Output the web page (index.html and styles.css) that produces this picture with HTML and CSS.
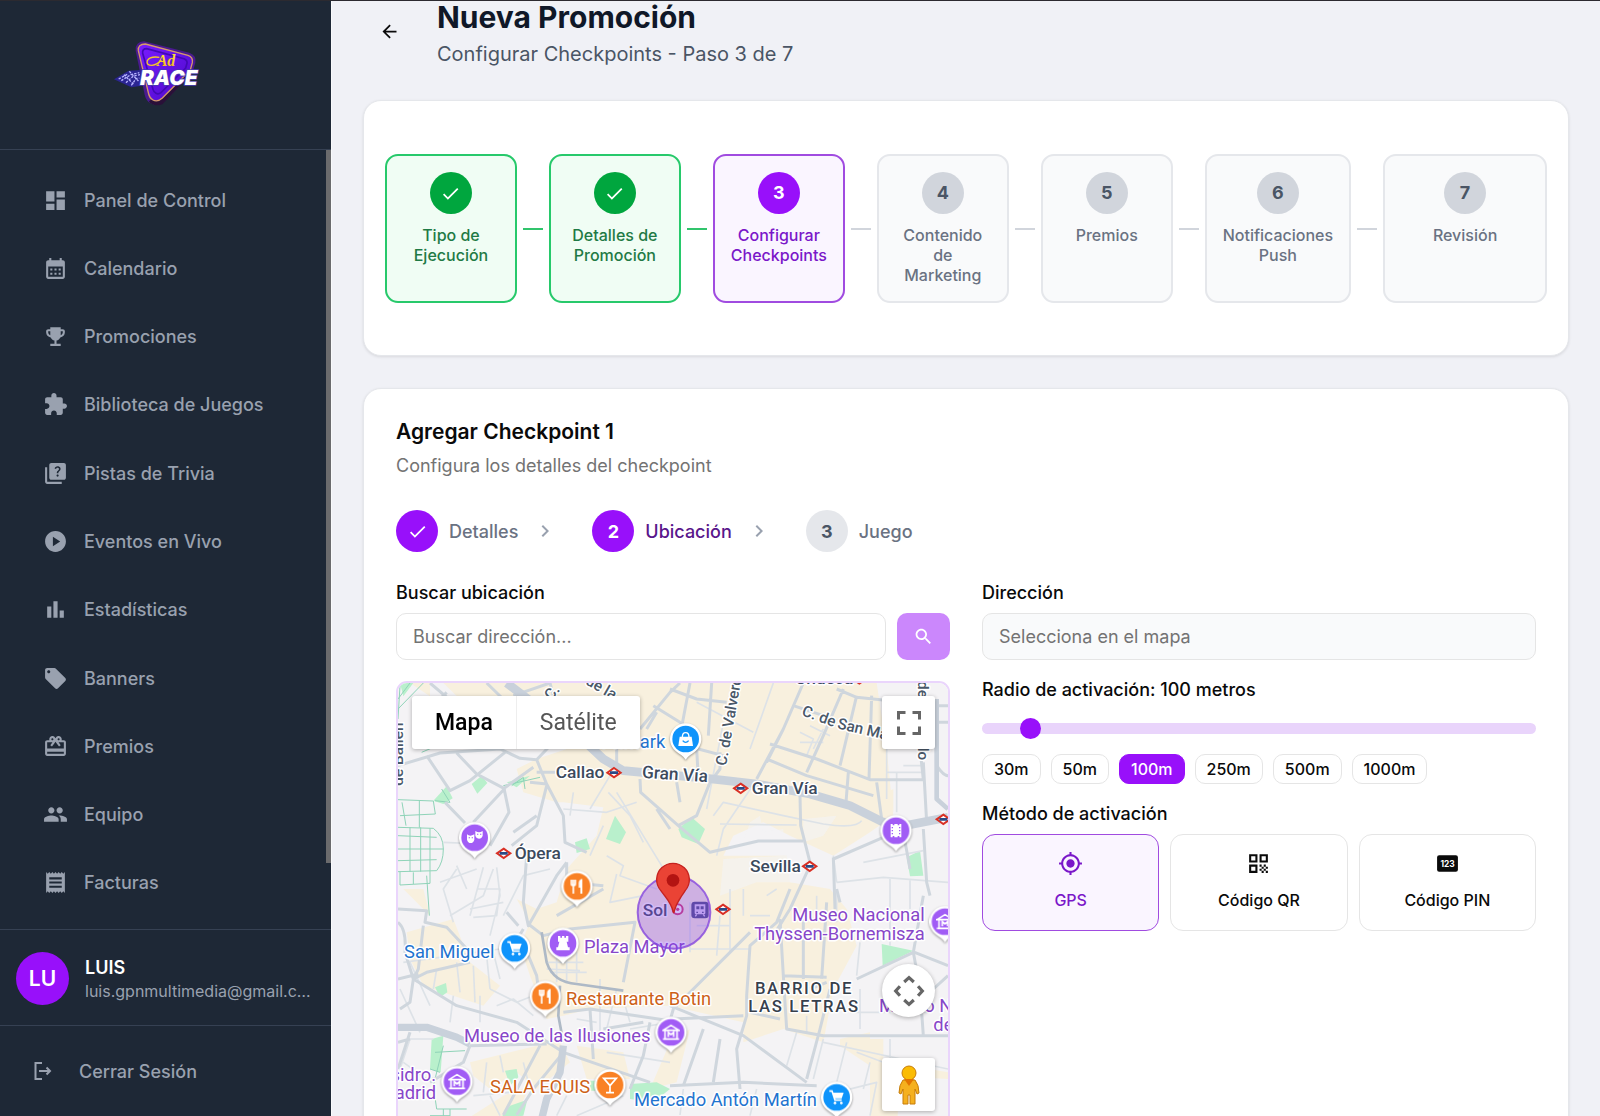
FILE: index.html
```html
<!DOCTYPE html>
<html lang="es">
<head>
<meta charset="utf-8">
<meta name="viewport" content="width=device-width, initial-scale=1">
<title>Nueva Promoción - Ad Race</title>
<link rel="stylesheet" href="styles.css">
</head>
<body>
<svg class="sprite" aria-hidden="true">
  <symbol id="i-check" viewBox="0 0 24 24"><path d="M9 16.17 4.83 12l-1.42 1.41L9 19 21 7l-1.41-1.41z"/></symbol>
  <symbol id="i-chevron" viewBox="0 0 24 24"><path d="M10 6 8.59 7.41 13.17 12l-4.58 4.59L10 18l6-6z"/></symbol>
  <symbol id="m-metro" viewBox="-26 -20 52 40"><path d="M0-14 20 0 0 14-20 0z" fill="#fff" stroke="#d93025" stroke-width="6"/><path d="M-12-4h24v8h-24z" fill="#2b4a86"/></symbol>
  <symbol id="m-pin" viewBox="-54 -54 108 124"><path d="M0 62C-8 50-18 46-30 36A47 47 0 1 1 30 36C18 46 8 50 0 62z" fill="#fff"/><circle r="40" fill="currentColor"/></symbol>
  <symbol id="m-museum" viewBox="-26 -26 52 52"><path fill="none" stroke="#fff" stroke-width="5" d="M-24-6 0-21 24-6zM-18-5v23M18-5v23M-24 20h48M-8 14V0l8 7 8-7v14"/></symbol>
  <symbol id="m-fork" viewBox="-26 -26 52 52"><path fill="none" stroke="#fff" stroke-width="5" d="M-17-20v13q0 5 6 5t6-5v-13M-11-20v42"/><path fill="#fff" d="M16-22v44h-6V4H5v-14q1-11 11-12z"/></symbol>
  <symbol id="m-cart" viewBox="-26 -26 52 52"><path fill="none" stroke="#fff" stroke-width="5" d="M-22-19h8L-5 8h20"/><path fill="#fff" d="M-13-14h34L15 3H-7z"/><circle cx="-5" cy="17" r="4" fill="#fff"/><circle cx="14" cy="17" r="4" fill="#fff"/></symbol>
</svg>

<div class="app">
  <aside class="sidebar">
    <div class="brand">
      <svg class="brand-logo" viewBox="16 0 360 270" role="img" aria-label="Ad Race">
        <defs>
          <linearGradient id="lg" x1="0" y1="0" x2="1" y2="1"><stop offset="0" stop-color="#7a1cff"/><stop offset="1" stop-color="#4a08c8"/></linearGradient>
          <linearGradient id="gd" x1="0" y1="0" x2="0" y2="1"><stop offset="0" stop-color="#ffe93b"/><stop offset="1" stop-color="#f0b01c"/></linearGradient>
        </defs>
        <path d="M130 34 266 68q22 8 18 30l-8 28-84 88q-20 18-42 6-14-8-18-26L105 62q-2-26 25-28z" fill="#4a1a8f"/>
        <path d="M150 210q12 14 32 6l86-90" fill="none" stroke="#2a1038" stroke-width="14"/>
        <path d="M134 42 262 76q16 6 13 22l-6 22-84 84q-14 13-28 6-10-5-13-18L113 62q-2-19 21-20z" fill="url(#lg)" stroke="#d59a6b" stroke-width="4"/>
        <path d="M138 56 250 86q11 5 9 14l-4 14-74 74q-8 6-15 2-7-4-9-12L126 70q-2-14 12-14z" fill="none" stroke="#4208b5" stroke-width="5"/>
        <path d="M40 148 84 122l38-2-4 48-26 4z" fill="#2b2592"/>
        <path d="M54 147l26-14M62 152l28-18 26-6M76 158l22-20 20-4M92 166l14-20 10-2M70 134l30 30M86 124l30 32" stroke="#b9b5ff" stroke-width="4" stroke-dasharray="7 4" fill="none"/>
        <path d="M176 82q-28-4-36 10-4 14 14 14 16-2 28-16" fill="none" stroke="#f7c928" stroke-width="4"/>
        <text x="168" y="109" class="logo-ad" fill="url(#gd)">Ad</text>
        <text x="118" y="165" class="logo-race">RACE</text>
      </svg>
    </div>
    <nav class="menu" aria-label="Principal">
      <a href="#"><svg viewBox="0 0 24 24"><path d="M3 13h8V3H3v10zm0 8h8v-6H3v6zm10 0h8V11h-8v10zm0-18v6h8V3h-8z"/></svg>Panel de Control</a>
      <a href="#"><svg viewBox="0 0 24 24"><path d="M19 4h-1V2h-2v2H8V2H6v2H5c-1.11 0-1.99.9-1.99 2L3 20c0 1.1.89 2 2 2h14c1.1 0 2-.9 2-2V6c0-1.1-.9-2-2-2zm0 16H5V10h14v10zM9 14H7v-2h2v2zm4 0h-2v-2h2v2zm4 0h-2v-2h2v2zm-8 4H7v-2h2v2zm4 0h-2v-2h2v2zm4 0h-2v-2h2v2z"/></svg>Calendario</a>
      <a href="#"><svg viewBox="0 0 24 24"><path d="M19 5h-2V3H7v2H5c-1.1 0-2 .9-2 2v1c0 2.55 1.92 4.63 4.39 4.94.63 1.5 1.98 2.63 3.61 2.96V19H7v2h10v-2h-4v-3.1c1.63-.33 2.98-1.46 3.61-2.96C19.08 12.63 21 10.55 21 8V7c0-1.1-.9-2-2-2zM5 8V7h2v3.82C5.84 10.4 5 9.3 5 8zm14 0c0 1.3-.84 2.4-2 2.82V7h2v1z"/></svg>Promociones</a>
      <a href="#"><svg viewBox="0 0 24 24"><path d="M20.5 11H19V7c0-1.1-.9-2-2-2h-4V3.5C13 2.12 11.88 1 10.5 1S8 2.12 8 3.5V5H4c-1.1 0-1.99.9-1.99 2v3.8H3.5c1.49 0 2.7 1.21 2.7 2.7s-1.21 2.7-2.7 2.7H2V20c0 1.1.9 2 2 2h3.8v-1.5c0-1.49 1.21-2.7 2.7-2.7 1.49 0 2.7 1.21 2.7 2.7V22H17c1.1 0 2-.9 2-2v-4h1.5c1.38 0 2.5-1.12 2.5-2.5S21.88 11 20.5 11z"/></svg>Biblioteca de Juegos</a>
      <a href="#"><svg viewBox="0 0 24 24"><path d="M4 6H2v14c0 1.1.9 2 2 2h14v-2H4V6z"/><path d="M20 2H8c-1.1 0-2 .9-2 2v12c0 1.1.9 2 2 2h12c1.1 0 2-.9 2-2V4c0-1.1-.9-2-2-2zm-5.99 13c-.59 0-1.05-.47-1.05-1.05 0-.59.47-1.04 1.05-1.04.59 0 1.04.45 1.04 1.04-.01.58-.45 1.05-1.04 1.05zm2.5-6.17c-.63.93-1.23 1.21-1.56 1.81-.13.24-.18.4-.18 1.18h-1.52c0-.41-.06-1.08.26-1.65.41-.73 1.18-1.16 1.63-1.8.48-.68.21-1.94-1.14-1.94-.88 0-1.32.67-1.5 1.23l-1.37-.57C11.51 5.96 12.52 5 13.99 5c1.23 0 2.08.56 2.51 1.26.37.61.58 1.73.01 2.57z"/></svg>Pistas de Trivia</a>
      <a href="#"><svg viewBox="0 0 24 24"><path d="M12 2C6.48 2 2 6.48 2 12s4.48 10 10 10 10-4.48 10-10S17.52 2 12 2zM9.5 16.5v-9l7 4.500z"/></svg>Eventos en Vivo</a>
      <a href="#"><svg viewBox="0 0 24 24"><path d="M4 9h4v11H4zm12 4h4v7h-4zm-6-9h4v16h-4z"/></svg>Estadísticas</a>
      <a href="#"><svg viewBox="0 0 24 24"><path d="M21.41 11.58l-9-9C12.05 2.22 11.55 2 11 2H4c-1.1 0-2 .9-2 2v7c0 .55.22 1.05.59 1.42l9 9c.36.36.86.58 1.41.58.55 0 1.05-.22 1.41-.59l7-7c.37-.36.59-.86.59-1.41 0-.55-.23-1.06-.59-1.42zM5.5 7C4.67 7 4 6.33 4 5.5S4.67 4 5.5 4 7 4.67 7 5.5 6.33 7 5.5 7z"/></svg>Banners</a>
      <a href="#"><svg viewBox="0 0 24 24"><path d="M20 6h-2.18c.11-.31.18-.65.18-1 0-1.66-1.34-3-3-3-1.05 0-1.96.54-2.5 1.35l-.5.67-.5-.68C10.96 2.54 10.05 2 9 2 7.34 2 6 3.34 6 5c0 .35.07.69.18 1H4c-1.11 0-1.99.89-1.99 2L2 19c0 1.11.89 2 2 2h16c1.11 0 2-.89 2-2V8c0-1.11-.89-2-2-2zm-5-2c.55 0 1 .45 1 1s-.45 1-1 1-1-.45-1-1 .45-1 1-1zM9 4c.55 0 1 .45 1 1s-.45 1-1 1-1-.45-1-1 .45-1 1-1zm11 15H4v-2h16v2zm0-5H4V8h5.08L7 10.83 8.62 12 11 8.76l1-1.36 1 1.36L15.38 12 17 10.83 14.92 8H20v6z"/></svg>Premios</a>
      <a href="#"><svg viewBox="0 0 24 24"><path d="M16 11c1.66 0 2.99-1.34 2.99-3S17.66 5 16 5c-1.66 0-3 1.34-3 3s1.34 3 3 3zm-8 0c1.66 0 2.99-1.34 2.99-3S9.66 5 8 5C6.34 5 5 6.34 5 8s1.34 3 3 3zm0 2c-2.33 0-7 1.17-7 3.5V19h14v-2.500c0-2.33-4.67-3.5-7-3.5zm8 0c-.29 0-.62.02-.97.05 1.16.84 1.97 1.97 1.97 3.45V19h6v-2.500c0-2.33-4.67-3.5-7-3.5z"/></svg>Equipo</a>
      <a href="#"><svg viewBox="0 0 24 24"><path d="M18 17H6v-2h12v2zm0-4H6v-2h12v2zm0-4H6V7h12v2zM3 22l1.5-1.5L6 22l1.5-1.5L9 22l1.5-1.5L12 22l1.5-1.5L15 22l1.5-1.5L18 22l1.5-1.5L21 22V2l-1.5 1.5L18 2l-1.5 1.5L15 2l-1.5 1.5L12 2l-1.500 1.500L9 2 7.500 3.500 6 2 4.500 3.500 3 2v20z"/></svg>Facturas</a>
      <span class="menu-thumb"></span>
    </nav>
    <div class="profile">
      <span class="avatar">LU</span>
      <div class="profile-text">
        <p class="profile-name">LUIS</p>
        <p class="profile-mail">luis.gpnmultimedia@gmail.com</p>
      </div>
    </div>
    <button class="logout" type="button">
      <svg viewBox="0 0 20 20"><path d="M10 2H3.500v16H10M7 10h11M14.500 6.500 18 10l-3.500 3.500"/></svg>Cerrar Sesión
    </button>
  </aside>

  <main class="main">
    <header class="page-head">
      <button class="back" type="button" aria-label="Volver"><svg viewBox="0 0 24 24"><path d="M20 11H7.830l5.590-5.590L12 4l-8 8 8 8 1.410-1.410L7.830 13H20v-2z"/></svg></button>
      <div>
        <h1>Nueva Promoción</h1>
        <p class="page-sub">Configurar Checkpoints - Paso 3 de 7</p>
      </div>
    </header>

    <section class="card wizard">
      <ol class="steps">
        <li class="done"><div class="step"><span class="badge"><svg><use href="#i-check"/></svg></span><span>Tipo de Ejecución</span></div></li>
        <li class="done"><div class="step"><span class="badge"><svg><use href="#i-check"/></svg></span><span>Detalles de Promoción</span></div></li>
        <li class="current"><div class="step"><span class="badge">3</span><span>Configurar Checkpoints</span></div></li>
        <li><div class="step"><span class="badge">4</span><span>Contenido de Marketing</span></div></li>
        <li><div class="step"><span class="badge">5</span><span>Premios</span></div></li>
        <li><div class="step"><span class="badge">6</span><span>Notificaciones Push</span></div></li>
        <li><div class="step"><span class="badge">7</span><span>Revisión</span></div></li>
      </ol>
    </section>

    <section class="card editor">
      <h2>Agregar Checkpoint 1</h2>
      <p class="editor-sub">Configura los detalles del checkpoint</p>
      <ol class="substeps">
        <li><span class="badge purple"><svg><use href="#i-check"/></svg></span>Detalles<svg class="chev"><use href="#i-chevron"/></svg></li>
        <li class="on"><span class="badge purple">2</span>Ubicación<svg class="chev"><use href="#i-chevron"/></svg></li>
        <li><span class="badge light">3</span>Juego</li>
      </ol>

      <div class="columns">
        <div class="column">
          <div class="field">
            <label for="search">Buscar ubicación</label>
            <div class="search-row">
              <input class="text-input" id="search" type="text" placeholder="Buscar dirección...">
              <button class="search-btn" type="button" aria-label="Buscar"><svg viewBox="0 0 24 24"><path d="M15.500 14h-.79l-.28-.27C15.410 12.590 16 11.110 16 9.500 16 5.910 13.090 3 9.500 3S3 5.910 3 9.500 5.910 16 9.500 16c1.610 0 3.090-.59 4.230-1.570l.27.28v.79l5 4.990L20.490 19l-4.990-5zm-6 0C7.010 14 5 11.990 5 9.500S7.010 5 9.500 5 14 7.010 14 9.500 11.990 14 9.500 14z"/></svg></button>
            </div>
          </div>
          <div class="map">
            <svg class="map-canvas" viewBox="24 42 1650 1440" preserveAspectRatio="xMinYMin slice">
              <rect x="0" y="0" width="1700" height="1500" fill="#f4f3f5"/>
              <g fill="#f8f0de">
                <path d="M160 42 250 130 440 150 560 230 440 270 380 300 400 370 500 400 520 400 640 415 620 500 530 600 500 700 440 720 380 690 420 760 390 830 420 920 470 1050 520 1040 600 1020 840 1010 1060 1060 1060 1120 1180 1080 1300 1120 1330 960 1400 830 1370 720 1320 660 1200 640 1190 560 1000 560 1030 500 1120 460 1200 500 1330 560 1440 490 1510 440 1490 240 1460 42z"/>
                <path d="M50 790 190 750 240 880 330 950 280 1010 100 950 60 870zM240 1180 440 1130 500 1100 540 1180 440 1260 380 1210 300 1260 250 1220zM840 1120 900 1080 860 1240 780 1260zM1440 1110 1480 1110 1480 1200 1530 1200 1520 1400 1440 1400zM1500 1180 1674 1210 1674 1230 1500 1220zM1350 1110 1440 1090 1440 1190 1350 1130zM560 1130 700 1150 720 1230 590 1230zM200 1370 340 1280 420 1250 360 1380z"/>
                <path d="M60 42h60v40zM40 660h60l20 80zM1490 370l20-10v70z"/>
              </g>
              <g fill="#f4f3f5">
                <path d="M1080 460 1110 440 1120 490 1180 480 1180 510 1060 520zM1000 570 1190 560 1240 640 1100 640 990 680zM1240 450 1340 440 1300 500 1240 520z" opacity=".6"/>
              </g>
              <g fill="#b9f0cc">
                <path d="M130 395 170 352 188 388 160 405zM245 345 275 320 292 342 262 374zM648 510 675 440 708 490 690 525zM555 520 590 508 600 540 560 552zM865 480 905 445 945 480 925 525 875 505zM1550 565 1590 545 1600 620 1560 622zM135 955 168 942 172 970 150 985zM1475 825 1570 845 1478 890zM125 1110 160 1100 152 1210 120 1200zM345 1205 380 1200 385 1225 360 1250zM330 1350 360 1310 412 1292 400 1340zM720 1245 800 1240 840 1260 790 1300 720 1290zM600 1235h20v30h-20zM30 42h40l-30 40zM350 340 420 320 380 355z"/>
              </g>
              <g fill="none" stroke="#8fd3b8" stroke-width="3">
                <path d="M24 392 130 396 136 435 30 440M36 400 48 470M88 396v80M24 475 130 478Q160 500 160 540T140 605L24 608M24 500 140 505M24 540 160 540M24 575 140 572M60 475v133M92 475v133M120 478v127M30 608v40l90-5v-38M70 610v35M110 620 118 740M24 90 60 42M24 120 100 42M30 50 24 150M95 250 130 235M135 395 180 400M155 360 180 400M340 350 450 325M365 350 400 325 405 360"/>
                <path d="M160 1130 130 1250 140 1320M135 1150 225 1145M120 1200 150 1210M140 1320h90M160 1320v80M180 1320v60M120 1340h60"/>
              </g>
              <g fill="none" stroke="#dde2e7" stroke-width="5" stroke-linejoin="round">
                <path d="M1150 42 1080 240M1000 160 950 420M920 100 1090 190M970 440 1000 400 1180 440 1300 465Q1400 480 1415 455M990 465 1220 468M1095 340 1000 480 980 560M640 470 600 560M550 370 540 440M655 370 720 440 760 520M680 370 870 680M520 420 650 430 740 400M650 560 700 590 690 620 800 660M680 615 660 700 760 680M600 420 660 320"/>
                <path d="M160 520 280 525M200 590 230 660M150 640 260 600M310 600 280 680 180 740M280 595 240 740M320 595 330 680 300 800M240 720 340 700M200 600 160 660 190 760M260 660 330 660 320 740 250 745M340 740 400 620 480 600"/>
                <path d="M40 880 330 840M290 860 300 960M310 850 330 930M200 880 210 970M250 890 255 1000M140 900 130 960M320 1010 370 990 430 1040M190 980 180 1060M300 960 380 1000 430 980M270 980 270 1060M30 960 90 1090M60 880 120 1010"/>
                <path d="M470 880h110M500 850v90M530 850v90M560 850v90M480 910h110M470 900 570 905M630 930v180M680 960 650 1080M720 1080 840 1060M650 1150 840 1180M560 1050 620 1060M700 990 720 1060"/>
                <path d="M900 700v150M990 740 980 860M1080 740h60M900 840h180M1060 660v80M1130 680 1160 660M1280 680v60M1340 660v100M920 770h100M1020 660v190M1410 820 1400 920M1410 960v120M1250 1040v50M1380 1030h240M1300 1110 1270 1230M1300 1120 1674 1200M1370 1120 1340 1240M1400 1150 1480 1180 1500 1260M1440 1180 1420 1260M1340 1270 1460 1240 1440 1340M1220 1090 1190 1190M1500 1110v90"/>
                <path d="M1340 640 1480 625 1674 640M1500 630v200M1560 630v90M1490 240v150M1520 310v120M1490 310h110M1540 290h60v40M1230 190 1270 210 1250 260M1260 170 1320 200M1300 180 1270 240M1230 220h70M1330 560l10 80M1420 580 1600 545"/>
                <path d="M560 1340 700 1280M500 1340 530 1280M880 1260 870 1338M1100 1260 1080 1340M300 1280 330 1340M400 1180 420 1260M290 1180 280 1270M330 1160 340 1210M30 1200 60 1110 130 1110M40 1180 110 1230 240 1210M250 1280 360 1270"/>
              </g>
              <g fill="none" stroke="#cfd6dd" stroke-width="9" stroke-linejoin="round">
                <path d="M24 290 150 252 330 240 390 268 440 272 480 230 560 190M440 272 470 345 520 440 525 520 590 550M110 260 180 365 240 335 345 250M200 252 260 315 342 358 357 430 300 530M342 358 430 295M470 350 440 470 365 530M440 440 370 490M165 400 225 462M250 460 345 358M120 42 200 110M170 70 90 150M290 42 370 120M370 80 480 42M420 340 470 345M440 310 495 310"/>
                <path d="M750 180 840 70 870 42M790 110 870 160 930 210M800 130 770 180M750 330 752 370 865 470 960 550 1105 516 1240 516M865 470 920 440 960 340 990 300 990 250M840 480 800 420M900 42 870 200M840 60 920 90 1010 100M920 240 925 330M965 42 955 200M925 240 1000 260M860 340 870 400M680 240v80M480 42 490 80"/>
                <path d="M1240 42 1180 180 1100 330M1180 180 1130 280M1360 60 1300 200 1250 310M1400 80 1350 290M1445 80 1437 330M1140 225 1280 270 1440 332 1600 332M1130 270 1250 320 1450 380M1375 310 1368 400M1230 380 1232 470 1260 580M1460 340 1475 450M1340 60 1400 85 1500 95M1210 110 1300 140M1600 332 1590 240M1600 280 1610 460M1600 480 1610 640 1620 680M1540 490 1560 600M1330 565 1335 720M1330 570 1480 505 1520 485M1640 90v200q20 30 34 30M1640 110h34M1640 160h34M1260 590 1200 720 1150 800"/>
                <path d="M24 720 110 725 105 760 170 775 240 850M100 770 85 900 70 930 200 1010 380 1060 520 1150 780 1240M24 930 85 915M24 760Q50 780 45 850L70 930 110 910 240 880M70 930 60 1000 30 1020M350 730 385 770M410 560 400 700 415 770 500 620 530 580M415 765 460 800 540 780 735 760 700 940M400 780 370 830 330 840M415 860 440 920 450 1000M500 740 640 660M530 580 530 640 640 650"/>
                <path d="M520 1030 600 1020 840 1055 850 1020 1080 790M840 1010 1060 1100 1250 1240M600 1020 610 1170M640 1080 760 1060M780 1060 760 1160 720 1260M240 1130 470 1125M520 1150 430 1260 380 1338M240 1130 220 1180 120 1240M450 1130 340 1338M24 1120 60 1110M840 1250 1060 1240 1280 1250M60 1090 24 1200"/>
                <path d="M1200 660 1160 760 1080 830 1070 980 1070 1040 1040 1140 1050 1260M1170 750 1180 920 1190 1080 1300 1100 1680 1100M1240 750v180M1310 700 1295 930M850 1050 1060 1040M940 1080 880 1250M990 1110 970 1240M1320 960 1290 1080 1250 1230M1570 850 1600 680M1574 850 1674 890M1400 930 1570 850 1590 960 1600 1100M1630 960 1674 920M1340 660 1350 700M1310 940 1260 960M1180 920 1310 925M1080 1030 1170 1050"/>
              </g>
              <g fill="none" stroke="#c9d1db" stroke-width="26" stroke-linejoin="round">
                <path d="M350 42 440 110 560 195 640 270 700 305 950 328 1100 345 1260 375 1380 410 1470 455 1520 475 1674 445"/>
                <path d="M20 1075 110 1075 200 1105 240 1125M520 1130 510 1210 470 1290 455 1350" stroke-width="22"/>
                <path d="M1640 90v300l34 30" stroke-width="14"/>
              </g>
              <g fill="none" stroke="#aeb9c6" stroke-width="8">
                <path d="M455 790 470 880Q490 940 560 945L700 965M510 950 505 1040 520 1120"/>
              </g>

              <g class="map-street">
                <text x="497" y="328">Callao</text>
                <text transform="translate(755 326) rotate(4)">Gran Vía</text>
                <text x="1085" y="376">Gran Vía</text>
                <text x="374" y="570">Ópera</text>
                <text x="1080" y="608">Sevilla</text>
                <text x="758" y="740">Sol</text>
                <text x="1215" y="45">Chueca</text>
              </g>
              <path d="M1400 42h16l-8 5z" fill="#d93025"/>
              <g class="map-lane">
                <text transform="translate(1008 292) rotate(-80)">C. de Valverde</text>
                <text transform="translate(1233 138) rotate(20)">C. de</text>
                <text transform="translate(1340 178) rotate(13)">San Marcos</text>
                <text transform="translate(1585 36) rotate(90)">de</text>
                <text transform="translate(1585 236) rotate(90)">lo</text>
                <text transform="translate(584 44) rotate(30)">de la</text>
                <text transform="translate(484 96) rotate(-50)">C.</text>
                <text transform="translate(40 350) rotate(-90)">de Bailén</text>
              </g>
              <g class="map-poi">
                <g class="poi-blue"><text x="826" y="238" text-anchor="end">Primark</text><text x="42" y="867">San Miguel</text><text x="732" y="1310">Mercado Antón Martín</text></g>
                <g class="poi-purple"><text x="582" y="852">Plaza Mayor</text><text x="222" y="1118">Museo de las Ilusiones</text><text x="138" y="1237" text-anchor="end">San Isidro.</text><text x="138" y="1290" text-anchor="end">Madrid</text><text x="1604" y="757" text-anchor="end">Museo Nacional</text><text x="1604" y="812" text-anchor="end">Thyssen-Bornemisza</text><text x="1467" y="1030">Museo Nacional</text><text x="1630" y="1085">de</text></g>
                <g class="poi-orange"><text x="528" y="1008">Restaurante Botin</text><text x="300" y="1272">SALA EQUIS</text></g>
              </g>
              <g class="map-area"><text x="1242" y="976">BARRIO DE</text><text x="1242" y="1028">LAS LETRAS</text></g>

              <g>
                <use href="#m-metro" x="646" y="291" width="52" height="40"/>
                <use href="#m-metro" x="315" y="533" width="52" height="40"/>
                <use href="#m-metro" x="1026" y="338" width="52" height="40"/>
                <use href="#m-metro" x="1233" y="572" width="52" height="40"/>
                <use href="#m-metro" x="1634" y="431" width="52" height="40"/>
                <use href="#m-metro" x="973" y="701" width="52" height="40"/>
              </g>
              <g class="pins">
                <g color="#a15cf5">
                  <use href="#m-pin" x="200" y="452" width="108" height="124"/>
                  <use href="#m-pin" x="1464" y="431" width="108" height="124"/>
                  <use href="#m-pin" x="465" y="769" width="108" height="124"/>
                  <use href="#m-pin" x="789" y="1036" width="108" height="124"/>
                  <use href="#m-pin" x="147" y="1184" width="108" height="124"/>
                  <use href="#m-pin" x="1611" y="704" width="108" height="124"/>
                </g>
                <g color="#f98125">
                  <use href="#m-pin" x="507" y="598" width="108" height="124"/>
                  <use href="#m-pin" x="412" y="928" width="108" height="124"/>
                  <use href="#m-pin" x="606" y="1194" width="108" height="124"/>
                </g>
                <g color="#0f94fb">
                  <use href="#m-pin" x="833" y="156" width="108" height="124"/>
                  <use href="#m-pin" x="320" y="784" width="108" height="124"/>
                  <use href="#m-pin" x="1286" y="1231" width="108" height="124"/>
                </g>
              </g>
              <g>
                <use href="#m-museum" x="817" y="1064" width="52" height="52"/>
                <use href="#m-museum" x="175" y="1212" width="52" height="52"/>
                <use href="#m-museum" x="1639" y="732" width="52" height="52"/>
                <use href="#m-fork" x="535" y="626" width="52" height="52"/>
                <use href="#m-fork" x="440" y="956" width="52" height="52"/>
                <use href="#m-cart" x="348" y="812" width="52" height="52"/>
                <use href="#m-cart" x="1314" y="1259" width="52" height="52"/>
                <path fill="#fff" d="M231 496q5 4 10 4t12-4v16q-3 10-11 10t-11-10zM256 486q6 4 11 4t11-4v14q-3 9-11 9t-11-8z"/>
                <path fill="#a15cf5" d="M236 505h4v3h-4zM245 505h4v3h-4zM261 494h4v3h-4zM270 494h4v3h-4z"/>
                <path fill="#fff" d="M1502 465h6v4h5v-4h10v4h5v-4h6v40h-6v-4h-5v4h-10v-4h-5v4h-6z"/>
                <path fill="#a15cf5" d="M1505 474h4v4h-4zM1505 483h4v4h-4zM1505 492h4v4h-4zM1527 474h4v4h-4zM1527 483h4v4h-4zM1527 492h4v4h-4z"/>
                <path fill="#fff" d="M504 801h7v5h5v-5h7v5h5v-5h7v17h-5l4 17h5v9h-40v-9h5l4-17h-4z"/>
                <path fill="#fff" d="M869 203h36l4 28h-44z"/><path d="M877 205q0-14 10-14t10 14" fill="none" stroke="#fff" stroke-width="4"/><path d="M878 215q9 10 18 0" fill="none" stroke="#0f94fb" stroke-width="4"/>
                <path fill="none" stroke="#fff" stroke-width="5" d="M641 1228h38l-19 22zM660 1250v20M648 1271h24"/>
              </g>
              <rect x="904" y="698" width="52" height="50" rx="10" fill="#4a4f86"/>
              <path d="M914 706h32v26q0 4-4 4h-24q-4 0-4-4z" fill="#dcd2f5"/><path d="M919 712h9v9h-9zM932 712h9v9h-9zM919 728h5v4h-5zM936 728h5v4h-5z" fill="#4a4f86"/><path d="m920 736-4 6M940 736l4 6" stroke="#dcd2f5" stroke-width="4"/>
              <circle cx="863" cy="721" r="15" fill="#fff" stroke="#d23a76" stroke-width="6"/><circle cx="863" cy="721" r="5" fill="#d23a76"/>
              <circle cx="852" cy="730" r="109" fill="#8540e8" fill-opacity=".36" stroke="#8546dd" stroke-opacity=".8" stroke-width="6"/>
              <path d="M851 732C842 696 830 690 812 664A49 49 0 1 1 886 664C870 690 860 696 851 732z" fill="#ea4335" stroke="#c5221f" stroke-width="4"/>
              <circle cx="849" cy="634" r="19" fill="#b31412"/>
            </svg>
            <div class="map-types">
              <button class="active" type="button">Mapa</button>
              <button type="button">Satélite</button>
            </div>
            <button class="map-btn full" type="button" aria-label="Pantalla completa"><svg viewBox="0 0 24 24"><path d="M1.500 8.500V1.500h7M15.500 1.500h7v7M22.500 15.500v7h-7M8.500 22.500h-7v-7" fill="none" stroke="#666" stroke-width="3"/></svg></button>
            <div class="map-corner">
              <button class="map-btn round" type="button" aria-label="Mover la cámara"><svg viewBox="0 0 30 30"><path d="m10.500 6.500 4.500-4 4.500 4M10.500 23.500l4.500 4 4.500-4M6.500 10.500l-4 4.500 4 4.500M23.500 10.500l4 4.500-4 4.500" fill="none" stroke="#666" stroke-width="3"/></svg></button>
              <button class="map-btn" type="button" aria-label="Street View"><svg class="pegman" viewBox="0 0 24 40"><circle cx="12" cy="8" r="7" fill="#fbbc04" stroke="#c77d0a"/><path d="M6 15h12q4 5 4 13l-2 1-2-5v15h-5v-9h-2v9H6V24l-2 5-2-1q0-8 4-13z" fill="#f5b01e" stroke="#c77d0a"/><path d="M7 14h10l-5 7z" fill="#e37400"/></svg></button>
            </div>
          </div>
        </div>

        <div class="column">
          <div class="field">
            <label for="address">Dirección</label>
            <input class="text-input muted" id="address" type="text" placeholder="Selecciona en el mapa" readonly>
          </div>
          <div class="field">
            <label for="radius">Radio de activación: 100 metros</label>
            <input class="slider" id="radius" type="range" min="30" max="1000" value="100">
            <div class="chips">
              <button type="button">30m</button>
              <button type="button">50m</button>
              <button class="active" type="button">100m</button>
              <button type="button">250m</button>
              <button type="button">500m</button>
              <button type="button">1000m</button>
            </div>
          </div>
          <div class="field">
            <span class="label">Método de activación</span>
            <div class="methods">
              <button class="active" type="button"><svg viewBox="0 0 24 24"><path d="M12 8c-2.210 0-4 1.790-4 4s1.790 4 4 4 4-1.790 4-4-1.790-4-4-4zm8.940 3c-.46-4.170-3.770-7.480-7.940-7.940V1h-2v2.060C6.830 3.520 3.520 6.830 3.060 11H1v2h2.060c.46 4.170 3.770 7.480 7.940 7.940V23h2v-2.060c4.170-.46 7.480-3.770 7.940-7.940H23v-2h-2.060zM12 19c-3.870 0-7-3.130-7-7s3.130-7 7-7 7 3.130 7 7-3.130 7-7 7z"/></svg>GPS</button>
              <button type="button"><svg viewBox="0 0 24 24"><path d="M3 11h8V3H3v8zm2-6h4v4H5V5zM3 21h8v-8H3v8zm2-6h4v4H5v-4zM13 3v8h8V3h-8zm6 6h-4V5h4v4zM19 19h2v2h-2zM13 13h2v2h-2zM15 15h2v2h-2zM13 17h2v2h-2zM15 19h2v2h-2zM17 17h2v2h-2zM17 13h2v2h-2zM19 15h2v2h-2z"/></svg>Código QR</button>
              <button type="button"><svg viewBox="0 0 24 24"><rect x="2" y="4" width="20" height="16" rx="2"/><text class="pin-digits" x="12" y="15">123</text></svg>Código PIN</button>
            </div>
          </div>
        </div>
      </div>
    </section>
  </main>
</div>
</body>
</html>
```
FILE: styles.css
```css
* { box-sizing: border-box; }

body {
  margin: 0;
  font-family: Inter, "Liberation Sans", sans-serif;
  color: #0a0a0a;
  background: #f0f1f6;
}

h1, h2, p, ol { margin: 0; padding: 0; }
ol { list-style: none; }
button { font: inherit; color: inherit; border: 0; background: none; padding: 0; cursor: pointer; }
svg { fill: currentColor; display: block; flex: none; }

.sprite { position: absolute; width: 0; height: 0; }

.app {
  display: flex;
  height: 100vh;
  border-top: 1px solid #2c2a30;
  overflow: hidden;
}

/* Sidebar */
.sidebar {
  flex: none;
  display: flex;
  flex-direction: column;
  width: 332px;
  background: #1e2836;
  border-right: 1px solid #f9fafb;
  color: #99a1af;
  font-size: 18px;
}

.brand {
  display: flex;
  align-items: center;
  justify-content: center;
  height: 149px;
  border-bottom: 1px solid #364153;
}
.brand-logo { width: 120px; height: 90px; overflow: visible; }
.logo-ad { font: italic bold 48px "Liberation Serif", serif; }
.logo-race {
  font: italic 900 62px Inter, sans-serif;
  fill: #fff;
  stroke: #4a3ab0;
  stroke-width: 5px;
  paint-order: stroke;
}

.menu {
  position: relative;
  flex: 1;
  display: grid;
  grid-auto-rows: 1fr;
  padding: 16px 16px 12px;
  overflow: hidden;
}
.menu a {
  display: flex;
  align-items: center;
  gap: 16px;
  padding: 0 27px;
  color: inherit;
  text-decoration: none;
  font-weight: 500;
}
.menu svg { width: 25px; height: 25px; }
.menu-thumb {
  position: absolute;
  top: 0;
  right: 0;
  width: 5px;
  height: 713px;
  background: #6b6b6d;
}

.profile {
  display: flex;
  align-items: center;
  gap: 16px;
  padding: 22px 16px 20px;
  border-top: 1px solid #364153;
  border-bottom: 1px solid #364153;
}
.avatar {
  flex: none;
  display: grid;
  place-items: center;
  width: 53px;
  height: 53px;
  border-radius: 50%;
  background: #9810fa;
  color: #fff;
  font-size: 21px;
  font-weight: 600;
}
.profile-text { min-width: 0; }
.profile-name { color: #fff; font-weight: 600; line-height: 24px; }
.profile-mail {
  font-size: 16px;
  line-height: 22px;
  overflow: hidden;
  text-overflow: ellipsis;
  white-space: nowrap;
}

.logout {
  display: flex;
  align-items: center;
  gap: 27px;
  height: 90px;
  padding: 0 32px;
  font-weight: 500;
}
.logout svg { width: 20px; height: 20px; fill: none; stroke: currentColor; stroke-width: 2px; }

/* Page */
.main {
  flex: 1;
  min-width: 0;
  padding: 0 31px 32px;
  overflow-y: auto;
  scrollbar-width: none;
}

.page-head { display: flex; gap: 21px; padding-bottom: 32px; }
.back { display: grid; place-items: center; width: 53px; height: 60px; }
.back svg { width: 21px; height: 21px; }
h1 { font-size: 30px; line-height: 32px; font-weight: 700; color: #101828; }
.page-sub { margin-top: 7px; font-size: 20px; line-height: 28px; color: #4a5565; }

.card {
  background: #fff;
  border: 1px solid #e5e7eb;
  border-radius: 18px;
  box-shadow: 0 1px 3px rgba(0, 0, 0, .1);
}

/* Wizard */
.wizard { padding: 53px 21px 52px; }
.steps { display: flex; }
.steps li { flex: 1 1 0; display: flex; align-items: center; }
.steps li:not(:last-child)::after {
  content: "";
  flex: none;
  width: 20px;
  height: 2px;
  margin: 0 6px;
  background: #d1d5dc;
}
.steps .done:not(:last-child)::after { background: #31c46c; }
.step {
  flex: 1;
  align-self: stretch;
  display: flex;
  flex-direction: column;
  align-items: center;
  gap: 11px;
  padding: 16px;
  border: 2px solid #e5e7eb;
  border-radius: 13px;
  background: #f9fafb;
  color: #6a7282;
  font-size: 16px;
  font-weight: 500;
  line-height: 20px;
  text-align: center;
}
.done .step { border-color: #27c96b; background: #f0fdf4; color: #1f7a45; }
.current .step { border-color: #a04be0; background: #faf5ff; color: #7a17c9; }

.badge {
  flex: none;
  display: grid;
  place-items: center;
  width: 42px;
  height: 42px;
  border-radius: 50%;
  background: #d1d5dc;
  color: #4a5565;
  font-size: 18px;
  font-weight: 700;
}
.badge svg { width: 21px; height: 21px; }
.done .badge { background: #00a63e; color: #fff; }
.current .badge, .badge.purple { background: #9810fa; color: #fff; }
.badge.light { background: #e5e7eb; }

/* Editor */
.editor { margin-top: 32px; padding: 32px; }
h2 { font-size: 21px; line-height: 22px; font-weight: 600; }
.editor-sub { margin-top: 11px; font-size: 18px; line-height: 24px; color: #737373; }

.substeps { display: flex; gap: 35px; margin-top: 32px; }
.substeps li {
  display: flex;
  align-items: center;
  gap: 11px;
  font-size: 18px;
  font-weight: 500;
  color: #6a7282;
}
.substeps .on { color: #59168b; }
.chev { width: 24px; height: 24px; margin-left: 4px; color: #99a1af; }

.columns { display: grid; grid-template-columns: 1fr 1fr; gap: 32px; margin-top: 32px; }
.column { min-width: 0; display: flex; flex-direction: column; gap: 21px; }
.field { display: flex; flex-direction: column; gap: 11px; }
.field label, .label { font-size: 18px; line-height: 18px; font-weight: 500; }

.text-input {
  width: 100%;
  min-width: 0;
  height: 47px;
  padding: 0 16px;
  border: 1px solid #e5e5e5;
  border-radius: 10px;
  background: #fff;
  font: inherit;
  font-size: 18px;
  color: inherit;
}
.text-input.muted { background: #f9fafb; }
.text-input::placeholder { color: #737373; opacity: 1; }

.search-row { display: flex; gap: 11px; }
.search-btn {
  flex: none;
  display: grid;
  place-items: center;
  width: 53px;
  height: 47px;
  border-radius: 10px;
  background: #cb87fc;
  color: #fff;
}
.search-btn svg { width: 21px; height: 21px; }

.slider {
  appearance: none;
  width: 100%;
  height: 21px;
  margin: 8px 0 4px;
  background: none;
}
.slider::-webkit-slider-runnable-track { height: 11px; border-radius: 6px; background: #e9d4fb; }
.slider::-webkit-slider-thumb {
  appearance: none;
  width: 21px;
  height: 21px;
  margin-top: -5px;
  border-radius: 50%;
  background: #9810fa;
}

.chips { display: flex; gap: 10px; }
.chips button {
  height: 30px;
  padding: 0 11px;
  border: 1px solid #e5e5e5;
  border-radius: 10px;
  font-size: 16px;
  font-weight: 500;
}
.chips .active { background: #9810fa; border-color: #9810fa; color: #fff; }

.methods { display: grid; grid-template-columns: repeat(3, 1fr); gap: 11px; }
.methods button {
  display: flex;
  flex-direction: column;
  align-items: center;
  gap: 14px;
  height: 97px;
  padding: 16px;
  border: 1px solid #e5e5e5;
  border-radius: 13px;
  font-size: 16px;
  font-weight: 500;
}
.methods svg { width: 25px; height: 25px; }
.methods .active { border-color: #a04be0; background: #faf5ff; color: #7a17c9; }
.pin-digits { font: bold 8px Inter, sans-serif; fill: #fff; text-anchor: middle; }

/* Map */
.map {
  position: relative;
  height: 480px;
  border: 2px solid #ead5fc;
  border-radius: 11px;
  overflow: hidden;
  font-family: Roboto, sans-serif;
}
.map-canvas { width: 100%; height: 480px; }
.map text { paint-order: stroke; stroke: #fff; stroke-width: 9px; stroke-linejoin: round; }
.map-street { font-size: 52px; font-weight: 500; fill: #3c4a5d; }
.map-lane { font-size: 46px; font-weight: 500; fill: #4a5868; }
.map-poi { font-size: 55px; }
.poi-blue { fill: #1f74cf; }
.poi-purple { fill: #8746c9; }
.poi-orange { fill: #cd6118; }
.map-area { font-size: 50px; font-weight: 500; fill: #37404c; text-anchor: middle; letter-spacing: 5px; }
.pins { filter: drop-shadow(0 3px 3px rgba(0, 0, 0, .4)); }

.map-types {
  position: absolute;
  top: 13px;
  left: 14px;
  display: flex;
  background: #fff;
  border-radius: 3px;
  box-shadow: 0 1px 4px rgba(0, 0, 0, .3);
}
.map-types button { height: 53px; padding: 0 23px; font-size: 23px; color: #565656; }
.map-types .active { color: #000; font-weight: 500; border-right: 1px solid #eee; }

.map-btn {
  display: grid;
  place-items: center;
  width: 53px;
  height: 53px;
  background: #fff;
  border-radius: 3px;
  box-shadow: 0 1px 4px rgba(0, 0, 0, .3);
}
.map-btn svg { width: 24px; height: 24px; }
.map-btn.full { position: absolute; top: 13px; right: 13px; }
.map-btn.round { border-radius: 50%; }
.map-btn.round svg { width: 32px; height: 32px; }
.map-btn .pegman { width: 24px; height: 40px; }
.map-corner {
  position: absolute;
  top: 281px;
  right: 13px;
  display: grid;
  gap: 41px;
}
```
